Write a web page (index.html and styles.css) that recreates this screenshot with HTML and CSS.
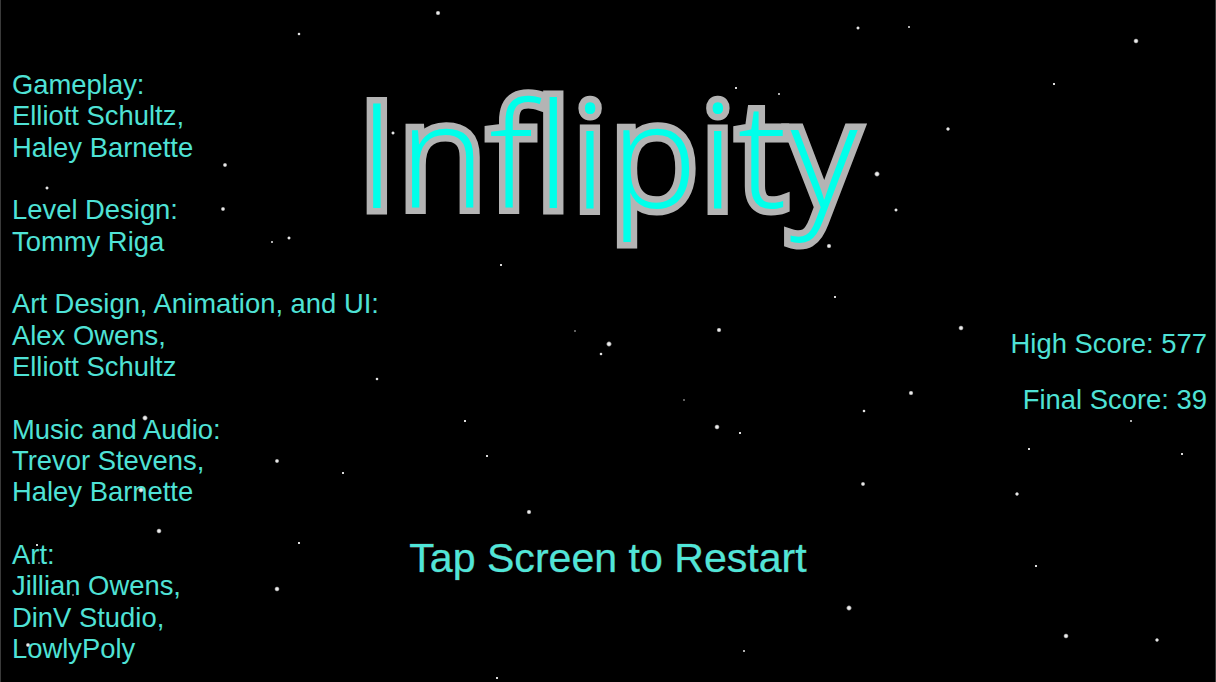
FILE: index.html
```html
<!DOCTYPE html>
<html lang="en">
<head>
<meta charset="utf-8">
<title>Inflipity</title>
<link rel="stylesheet" href="styles.css">
</head>
<body>
<main class="stage">
  <svg class="stars" width="1216" height="682" viewBox="0 0 1216 682" aria-hidden="true">
    <defs>
      <radialGradient id="glow">
        <stop offset="0" stop-color="#fff"/>
        <stop offset="0.5" stop-color="#fff" stop-opacity="0.85"/>
        <stop offset="1" stop-color="#fff" stop-opacity="0"/>
      </radialGradient>
    </defs>
    <g fill="url(#glow)">
      <circle cx="437" cy="13" r="2.6"/>
      <circle cx="298" cy="34" r="1.8"/>
      <circle cx="857" cy="28" r="2"/>
      <circle cx="908" cy="27" r="1.2"/>
      <circle cx="1135" cy="41" r="2.8"/>
      <circle cx="1053" cy="84" r="1.6"/>
      <circle cx="947" cy="129" r="2.2"/>
      <circle cx="876" cy="174" r="3"/>
      <circle cx="895" cy="210" r="2"/>
      <circle cx="828" cy="246" r="2.6"/>
      <circle cx="224" cy="165" r="2.4"/>
      <circle cx="46" cy="188" r="2"/>
      <circle cx="222" cy="209" r="2.4"/>
      <circle cx="288" cy="238" r="2"/>
      <circle cx="271" cy="242" r="1.2"/>
      <circle cx="500" cy="265" r="1.4"/>
      <circle cx="834" cy="297" r="1.4"/>
      <circle cx="960" cy="328" r="2.8"/>
      <circle cx="718" cy="330" r="2.6"/>
      <circle cx="608" cy="344" r="3"/>
      <circle cx="600" cy="354" r="1.8"/>
      <circle cx="574" cy="331" r="1"/>
      <circle cx="376" cy="379" r="1.8"/>
      <circle cx="910" cy="393" r="2.6"/>
      <circle cx="863" cy="411" r="1.8"/>
      <circle cx="144" cy="418" r="3"/>
      <circle cx="716" cy="427" r="2.8"/>
      <circle cx="739" cy="433" r="1.6"/>
      <circle cx="464" cy="421" r="1.6"/>
      <circle cx="1130" cy="421" r="1.2"/>
      <circle cx="1028" cy="449" r="1.4"/>
      <circle cx="486" cy="456" r="1.4"/>
      <circle cx="276" cy="461" r="2.4"/>
      <circle cx="342" cy="473" r="1.4"/>
      <circle cx="1181" cy="454" r="1.4"/>
      <circle cx="862" cy="484" r="2.4"/>
      <circle cx="1016" cy="494" r="2.2"/>
      <circle cx="140" cy="490" r="3"/>
      <circle cx="528" cy="512" r="2.6"/>
      <circle cx="158" cy="531" r="2.8"/>
      <circle cx="298" cy="543" r="1.6"/>
      <circle cx="1035" cy="566" r="1.6"/>
      <circle cx="276" cy="589" r="2.8"/>
      <circle cx="848" cy="608" r="3"/>
      <circle cx="1065" cy="636" r="2.8"/>
      <circle cx="1156" cy="640" r="2.2"/>
      <circle cx="27" cy="645" r="2.4"/>
      <circle cx="36" cy="545" r="1.4"/>
      <circle cx="72" cy="595" r="1"/>
      <circle cx="38" cy="563" r="1"/>
      <circle cx="743" cy="651" r="1.2"/>
      <circle cx="496" cy="678" r="1.6"/>
      <circle cx="683" cy="400" r="1"/>
      <circle cx="392" cy="133" r="2"/>
      <circle cx="560" cy="112" r="1.4"/>
      <circle cx="778" cy="94" r="1.2"/>
      <circle cx="735" cy="88" r="1.4"/>
    </g>
  </svg>

  <section class="credits">
    <p>Gameplay:<br>Elliott Schultz,<br>Haley Barnette</p>
    <p>Level Design:<br>Tommy Riga</p>
    <p>Art Design, Animation, and UI:<br>Alex Owens,<br>Elliott Schultz</p>
    <p>Music and Audio:<br>Trevor Stevens,<br>Haley Barnette</p>
    <p>Art:<br>Jillian Owens,<br>DinV Studio,<br>LowlyPoly</p>
  </section>

  <h1 class="title">Inflipity</h1>

  <section class="scores">
    <p>High Score: 577</p>
    <p>Final Score: 39</p>
  </section>

  <p class="restart">Tap Screen to Restart</p>
</main>
</body>
</html>
```

FILE: styles.css
```css
html, body {
  margin: 0;
  padding: 0;
  background: #000;
}

.stage {
  position: relative;
  box-sizing: border-box;
  width: 1216px;
  height: 682px;
  overflow: hidden;
  background: #000;
  border-left: 1px solid #3a3a3a;
  border-right: 1px solid #3a3a3a;
  display: grid;
  grid-template-columns: 1fr;
  grid-template-rows: 1fr;
  font-family: "Liberation Sans", Arial, sans-serif;
  color: #4fe2d6;
}

.stars {
  position: absolute;
  left: 0;
  top: 0;
  z-index: 0;
}

.credits,
.title,
.scores,
.restart {
  grid-area: 1 / 1;
  position: relative;
  z-index: 1;
}

.credits {
  justify-self: start;
  align-self: start;
  padding: 69px 0 0 11px;
  font-size: 27.4px;
  line-height: 31.33px;
  display: flex;
  flex-direction: column;
  gap: 31.33px;
}

.credits p,
.scores p {
  margin: 0;
  white-space: nowrap;
}

.title {
  justify-self: center;
  align-self: start;
  margin: 79px 0 0 4px;
  font-family: "Open Sans", sans-serif;
  font-weight: 340;
  font-size: 146px;
  line-height: 1;
  color: #00ffea;
  -webkit-text-stroke: 13px #b4b4b4;
  paint-order: stroke fill;
  letter-spacing: 3.8px;
}

.scores {
  justify-self: end;
  align-self: start;
  padding: 328px 8px 0 0;
  font-size: 27.4px;
  line-height: 31.33px;
  text-align: right;
  display: flex;
  flex-direction: column;
  gap: 25px;
}

.restart {
  justify-self: center;
  align-self: start;
  margin: 535px 0 0 0;
  font-size: 41.1px;
  line-height: 46px;
  white-space: nowrap;
  color: #4fe6d8;
  -webkit-text-stroke: 0.6px rgba(190, 190, 190, 0.55);
  paint-order: stroke fill;
}
```
